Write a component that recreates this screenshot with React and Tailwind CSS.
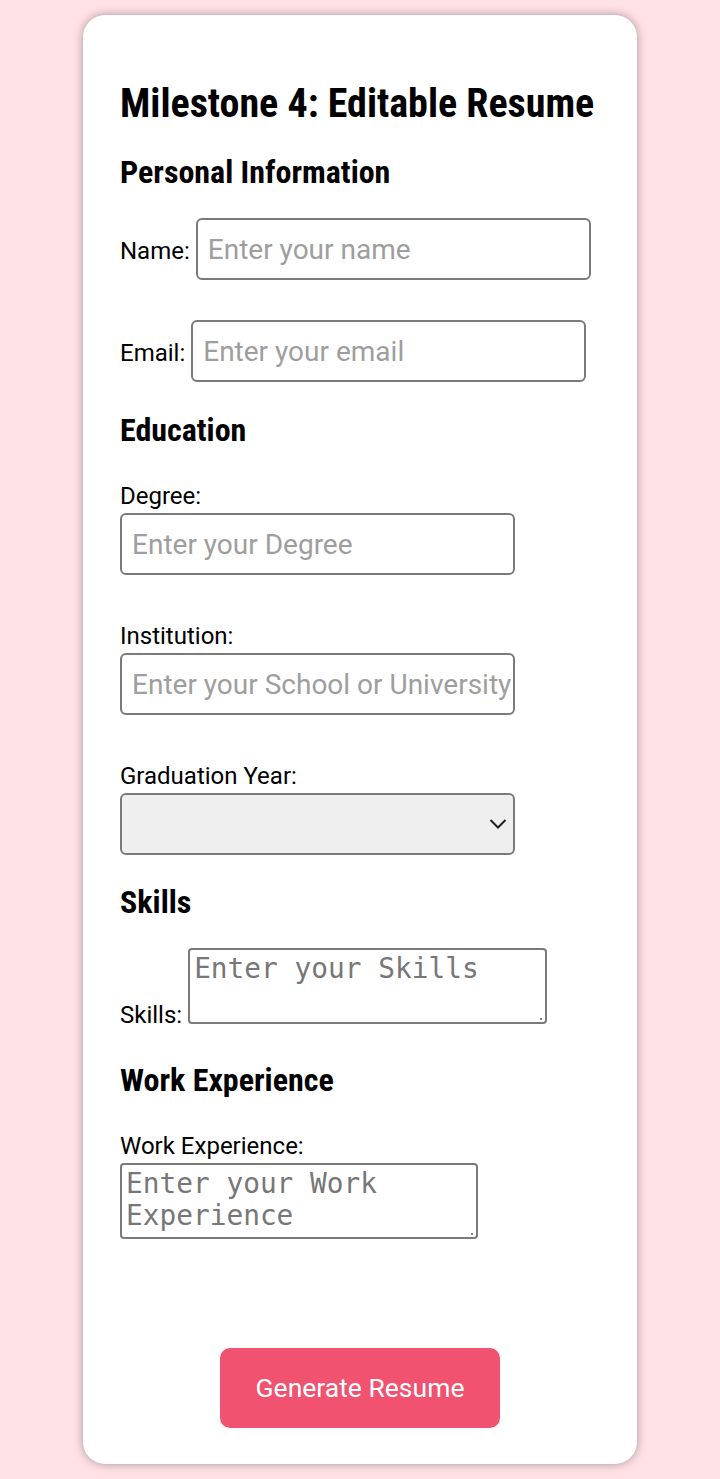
import React from "react";

const condensed = { fontFamily: "'Roboto Condensed', Roboto, 'Liberation Sans', sans-serif" };

const H2 = ({ children, className = "" }) => (
  <h2
    className={
      "text-[32px] leading-[40px] font-bold text-black font-stretch-condensed " +
      className
    }
    style={condensed}
  >
    {children}
  </h2>
);

const labelCls = "text-[24px] leading-[28px] text-black";

const inputCls =
  "h-[62px] w-[395px] rounded-[6px] border-2 border-[#7a7a7a] bg-white pl-[10px] pr-[2px] text-[28px] text-black placeholder:text-[#9e9e9e] outline-none";

const taCls =
  "block h-[76px] resize-none rounded-[4px] border-2 border-[#7a7a7a] bg-white px-[4px] py-[3px] text-[27.8px] leading-[32px] text-black placeholder:text-[#777777] outline-none";

const mono = { fontFamily: "'DejaVu Sans Mono', monospace" };

const Dot = () => (
  <span className="pointer-events-none absolute right-[5px] bottom-[4px] h-[2px] w-[2px] rounded-full bg-[#555]" />
);

export default function App() {
  return (
    <div
      className="min-h-[1479px] bg-[#ffe1e6] py-[15px]"
      style={{ fontFamily: "Roboto, 'Liberation Sans', sans-serif" }}
    >
      <div className="mx-auto flex w-[554px] flex-col rounded-[22px] bg-white px-[37px] pt-[64px] pb-[36px] shadow-[0_0_10px_rgba(0,0,0,0.35)]">
        <h1
          className="whitespace-nowrap text-[40px] leading-[50px] font-bold text-black font-stretch-condensed"
          style={condensed}
        >
          Milestone 4: Editable Resume
        </h1>

        <H2 className="mt-[23px]">Personal Information</H2>

        <div className="mt-[26px] flex items-baseline gap-[6px]">
          <label className={labelCls}>Name:</label>
          <input type="text" placeholder="Enter your name" className={inputCls} />
        </div>

        <div className="mt-[40px] flex items-baseline gap-[6px]">
          <label className={labelCls}>Email:</label>
          <input type="email" placeholder="Enter your email" className={inputCls} />
        </div>

        <H2 className="mt-[28px]">Education</H2>

        <label className={labelCls + " mt-[32px]"}>Degree:</label>
        <input
          type="text"
          placeholder="Enter your Degree"
          className={inputCls + " mt-[3px]"}
        />

        <label className={labelCls + " mt-[47px]"}>Institution:</label>
        <input
          type="text"
          placeholder="Enter your School or University"
          className={inputCls + " mt-[3px]"}
        />

        <label className={labelCls + " mt-[47px]"}>Graduation Year:</label>
        <div className="relative mt-[3px] w-[395px]">
          <select className="block h-[62px] w-[395px] appearance-none rounded-[6px] border-2 border-[#7a7a7a] bg-[#efefef] px-[10px] text-[28px] text-black outline-none">
            <option value=""></option>
          </select>
          <svg
            className="pointer-events-none absolute right-[8px] top-[25px]"
            width="18"
            height="12"
            viewBox="0 0 18 12"
            fill="none"
          >
            <path d="M1.5 2 L9 9.5 L16.5 2" stroke="#222" strokeWidth="2" />
          </svg>
        </div>

        <H2 className="mt-[27px]">Skills</H2>

        <div className="mt-[26px] flex items-end gap-[6px]">
          <label className={labelCls + " mb-[-5px]"}>Skills:</label>
          <div className="relative">
            <textarea
              placeholder="Enter your Skills"
              className={taCls + " w-[359px]"}
              style={mono}
            />
            <Dot />
          </div>
        </div>

        <H2 className="mt-[36px]">Work Experience</H2>

        <label className={labelCls + " mt-[32px]"}>Work Experience:</label>
        <div className="relative mt-[3px] w-[358px]">
          <textarea
            placeholder="Enter your Work Experience"
            className={taCls + " w-[358px]"}
            style={mono}
          />
          <Dot />
        </div>

        <button className="mx-auto mt-[109px] h-[80px] w-[280px] rounded-[10px] bg-[#f0526f] text-[26.5px] text-white">
          Generate Resume
        </button>
      </div>
    </div>
  );
}
